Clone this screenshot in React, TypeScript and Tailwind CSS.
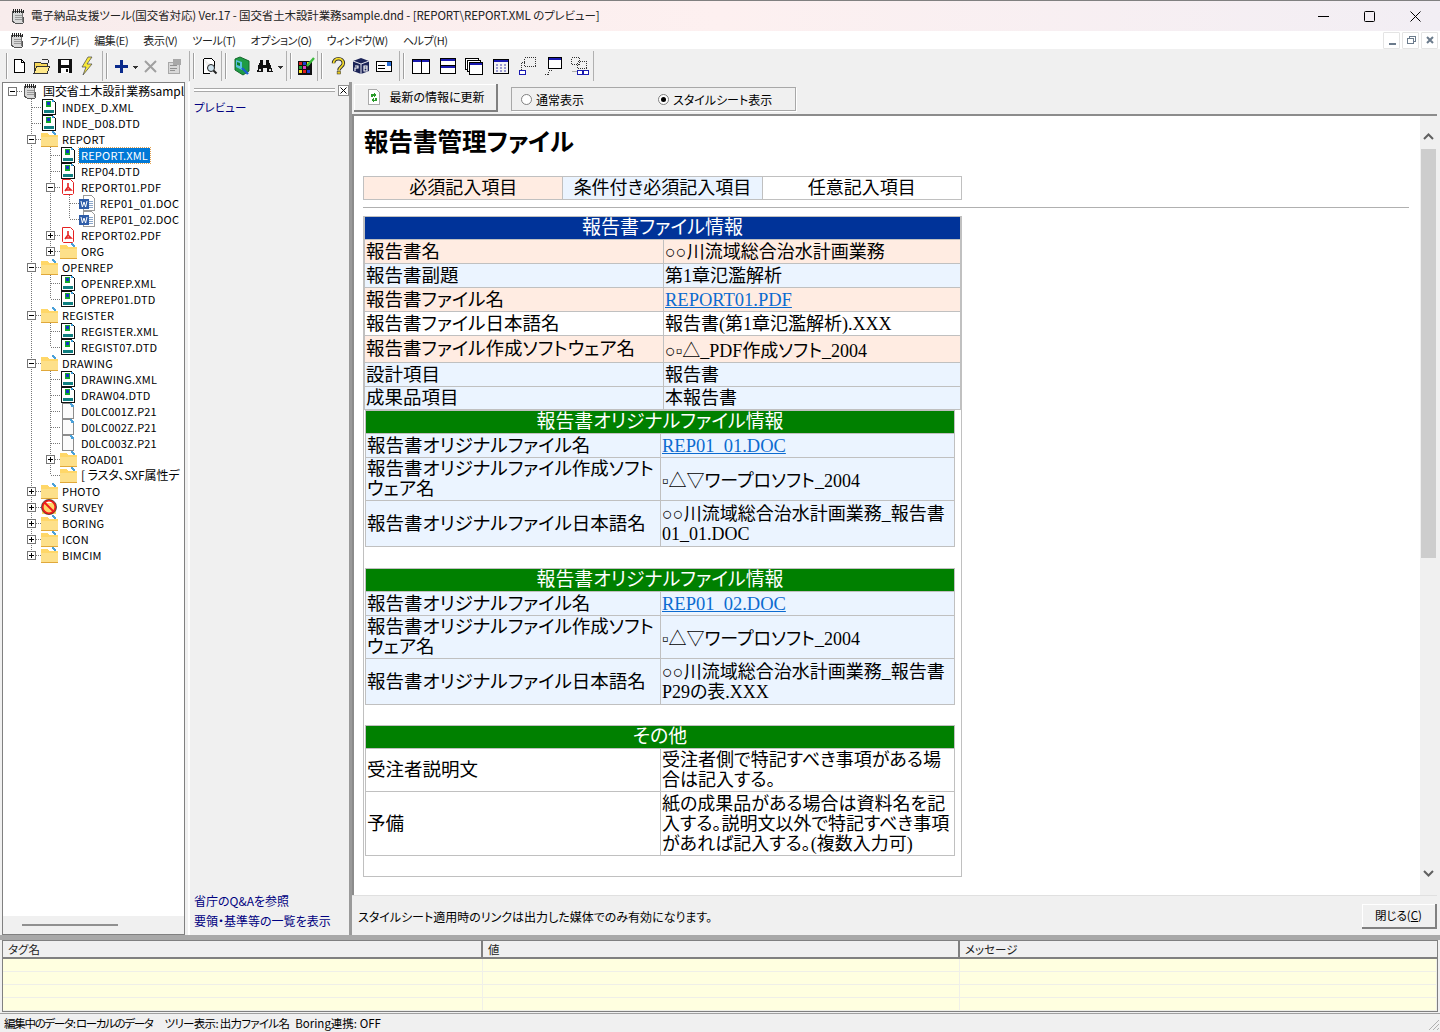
import type { ReactNode } from 'react'

const ui = '[font-family:"Noto_Sans_CJK_JP","Noto_Sans",sans-serif] [font-feature-settings:"palt"]'
const doc = '[font-family:"Liberation_Serif","Noto_Sans_CJK_JP",serif]'

function Ico({ children, w = 18, h = 18 }: { children: ReactNode; w?: number; h?: number }) {
  return (
    <svg width={w} height={h} viewBox={`0 0 ${w} ${h}`} className="shrink-0" shapeRendering="crispEdges">
      {children}
    </svg>
  )
}

function Notebook() {
  return (
    <Ico w={16} h={16}>
      <path d="M3 3h9l2 11-1 1H5l-3-2z" fill="#d8d8d8" stroke="#555" />
      <path d="M3 1v4M5 1v4M7 1v4M9 1v4M11 1v4M13 2v3" stroke="#222" />
      <path d="M5 7h7M5 9h7M5 11h7" stroke="#999" />
      <path d="M12 5l1 9" stroke="#777" />
    </Ico>
  )
}

function XmlIcon() {
  return (
    <Ico w={16} h={16}>
      <path d="M1.5 0.5h10l3 3v12h-13z" fill="#fff" stroke="#111" />
      <rect x="3" y="11" width="10" height="3" fill="#0f7f80" />
      <rect x="5" y="2" width="5" height="6" fill="#12a82c" />
      <rect x="6" y="3" width="3" height="3" fill="#1733c9" />
      <rect x="11" y="1" width="2" height="2" fill="#3aa0dc" />
    </Ico>
  )
}

function FolderIcon() {
  return (
    <Ico w={17} h={16}>
      <path d="M0 2h6l2 2h9v11l-1 1H1l-1-1z" fill="#ffd768" />
      <path d="M0 6h17v9l-1 1H1l-1-1z" fill="#fde08a" />
      <path d="M0 15h17v1H0z" fill="#e0a83a" />
      <path d="M11 0h2v1h1v1h1v2h-2V3h-1V2h-1z" fill="#4aa0d8" />
    </Ico>
  )
}

function PdfIcon() {
  return (
    <svg width="16" height="16" viewBox="0 0 16 16" className="shrink-0">
      <path d="M2.5 0.5h8l3 3v11l-1 1h-9l-1-1z" fill="#fff" stroke="#e52222" />
      <path d="M8 4v4l-3 4M8 8l3 3H6" stroke="#e52222" fill="none" strokeWidth="1.6" />
    </svg>
  )
}

function DocIcon() {
  return (
    <Ico w={16} h={16}>
      <path d="M4.5 0.5h8l3 3v12h-11z" fill="#fff" stroke="#9a9a9a" />
      <path d="M10 6h4M10 8h4M10 10h4M10 12h4" stroke="#8ba6c9" />
      <rect x="0" y="4" width="10" height="10" fill="#2f5da8" />
      <path d="M2 6l1.4 6 1.6-5 1.6 5L8 6" stroke="#fff" fill="none" shapeRendering="auto" />
    </Ico>
  )
}

function BlankIcon() {
  return (
    <Ico w={16} h={16}>
      <path d="M2.5 0.5h8l3 3v12h-11z" fill="#fbfbfb" stroke="#8c8c8c" />
      <path d="M10 0h2v1h1v1h1v2h-3z" fill="#4aa0d8" />
    </Ico>
  )
}

function NoIcon() {
  return (
    <svg width="16" height="16" viewBox="0 0 16 16" className="shrink-0">
      <rect x="1" y="4" width="14" height="11" fill="#ffd768" />
      <circle cx="8" cy="8" r="6.4" fill="none" stroke="#ee1c1c" strokeWidth="2" />
      <circle cx="8" cy="8" r="7.6" fill="none" stroke="#111" strokeWidth="0.6" />
      <path d="M3.5 3.5l9 9" stroke="#ee1c1c" strokeWidth="2" />
    </svg>
  )
}

type Kind = 'book' | 'xml' | 'folder' | 'pdf' | 'doc' | 'blank' | 'no'
type Row = { d: number; exp?: '+' | '-'; kind: Kind; label: string; selected?: boolean; wide?: boolean }

const rows: Row[] = [
  { d: 0, exp: '-', kind: 'book', label: '国交省土木設計業務sample', wide: true },
  { d: 1, kind: 'xml', label: 'INDEX_D.XML' },
  { d: 1, kind: 'xml', label: 'INDE_D08.DTD' },
  { d: 1, exp: '-', kind: 'folder', label: 'REPORT' },
  { d: 2, kind: 'xml', label: 'REPORT.XML', selected: true },
  { d: 2, kind: 'xml', label: 'REP04.DTD' },
  { d: 2, exp: '-', kind: 'pdf', label: 'REPORT01.PDF' },
  { d: 3, kind: 'doc', label: 'REP01_01.DOC' },
  { d: 3, kind: 'doc', label: 'REP01_02.DOC' },
  { d: 2, exp: '+', kind: 'pdf', label: 'REPORT02.PDF' },
  { d: 2, exp: '+', kind: 'folder', label: 'ORG' },
  { d: 1, exp: '-', kind: 'folder', label: 'OPENREP' },
  { d: 2, kind: 'xml', label: 'OPENREP.XML' },
  { d: 2, kind: 'xml', label: 'OPREP01.DTD' },
  { d: 1, exp: '-', kind: 'folder', label: 'REGISTER' },
  { d: 2, kind: 'xml', label: 'REGISTER.XML' },
  { d: 2, kind: 'xml', label: 'REGIST07.DTD' },
  { d: 1, exp: '-', kind: 'folder', label: 'DRAWING' },
  { d: 2, kind: 'xml', label: 'DRAWING.XML' },
  { d: 2, kind: 'xml', label: 'DRAW04.DTD' },
  { d: 2, kind: 'blank', label: 'D0LC001Z.P21' },
  { d: 2, kind: 'blank', label: 'D0LC002Z.P21' },
  { d: 2, kind: 'blank', label: 'D0LC003Z.P21' },
  { d: 2, exp: '+', kind: 'folder', label: 'ROAD01' },
  { d: 2, kind: 'folder', label: '[ ラスタ、SXF属性デ', wide: true },
  { d: 1, exp: '+', kind: 'folder', label: 'PHOTO' },
  { d: 1, exp: '+', kind: 'no', label: 'SURVEY' },
  { d: 1, exp: '+', kind: 'folder', label: 'BORING' },
  { d: 1, exp: '+', kind: 'folder', label: 'ICON' },
  { d: 1, exp: '+', kind: 'folder', label: 'BIMCIM' },
]

function hasNext(i: number, c: number) {
  for (let j = i + 1; j < rows.length; j++) {
    if (rows[j].d === c) return true
    if (rows[j].d < c) return false
  }
  return false
}

function TreeCell({ mode, exp, root, next }: { mode: 'line' | 'empty' | 'elbow'; exp?: '+' | '-'; root?: boolean; next?: boolean }) {
  return (
    <svg width="19" height="16" viewBox="0 0 19 16" className="shrink-0" shapeRendering="crispEdges">
      {mode === 'line' && <path d="M9.5 0v16" stroke="#777" strokeDasharray="1 1" />}
      {mode === 'elbow' && (
        <>
          {!root && <path d={next ? 'M9.5 0v16' : 'M9.5 0v8'} stroke="#777" strokeDasharray="1 1" />}
          <path d="M10 8.5h9" stroke="#777" strokeDasharray="1 1" />
        </>
      )}
      {exp && (
        <>
          <rect x="5.5" y="4.5" width="8" height="8" fill="#fff" stroke="#777" />
          <path d="M7 8.5h5" stroke="#000" />
          {exp === '+' && <path d="M9.5 6v5" stroke="#000" />}
        </>
      )}
    </svg>
  )
}

function kindIcon(k: Kind) {
  if (k === 'book') return <Notebook />
  if (k === 'xml') return <XmlIcon />
  if (k === 'folder') return <FolderIcon />
  if (k === 'pdf') return <PdfIcon />
  if (k === 'doc') return <DocIcon />
  if (k === 'no') return <NoIcon />
  return <BlankIcon />
}

function Tree() {
  return (
    <div className="flex flex-col">
      {rows.map((r, i) => (
        <div key={i} className="flex h-4 items-center whitespace-nowrap">
          {Array.from({ length: r.d }).map((_, c) => (
            <TreeCell key={c} mode={hasNext(i, c) ? 'line' : 'empty'} />
          ))}
          <TreeCell mode="elbow" exp={r.exp} root={r.d === 0} next={hasNext(i, r.d)} />
          <span className="flex w-[19px] shrink-0">{kindIcon(r.kind)}</span>
          <span className={`px-[2px] pb-[1px] leading-[14px] ${r.wide ? 'text-[12px] tracking-[-0.1px]' : 'text-[11px] tracking-[0.2px]'} ${r.selected ? 'bg-[#0078d7] text-white outline-1 outline-dotted outline-[#e0a050]' : 'text-black'}`}>
            {r.label}
          </span>
        </div>
      ))}
    </div>
  )
}

function Grip() {
  return <div className="mx-[3px] h-[26px] w-[2px] border-l border-[#a0a0a0] bg-white" />
}
function Tb({ children, w = 23 }: { children: ReactNode; w?: number }) {
  return <div className="flex h-[26px] items-center justify-center" style={{ width: w }}>{children}</div>
}
function Band({ children, className = '' }: { children: ReactNode; className?: string }) {
  return <div className={`flex h-[30px] items-center border-r border-[#b0b0b0] ${className}`}>{children}</div>
}
function Arrow() {
  return (
    <Ico w={7} h={18}>
      <path d="M1 9h5v1H1zM2 10h3v1H2zM3 11h1v1H3z" fill="#333" />
    </Ico>
  )
}
function Win({ children }: { children: ReactNode }) {
  return <Ico>{children}</Ico>
}

function Toolbar() {
  return (
    <div className="flex h-[33px] shrink-0 items-center bg-[#f0f0f0] pl-[3px]">
      <Band className="w-[100px]">
        <Grip />
        <Tb w={17}>
          <Ico><path d="M4.5 2.5h7l3 3v10h-10z" fill="#fff" stroke="#000" /><path d="M11.5 2.5v3h3" fill="none" stroke="#000" /></Ico>
        </Tb>
        <Tb w={30}>
          <Ico>
            <path d="M1 5h6l1 1h6v10H1z" fill="#f7d85a" stroke="#333" />
            <path d="M1 16l3-7h13l-3 7z" fill="#ffe98a" stroke="#333" />
            <path d="M9 2h5l2 2-1 2" fill="none" stroke="#333" />
          </Ico>
        </Tb>
        <Tb w={16}>
          <Ico>
            <path d="M2 2h14v14H2z" fill="#111" />
            <rect x="5" y="3" width="8" height="5" fill="#fff" />
            <rect x="5" y="11" width="8" height="5" fill="#fff" />
            <rect x="10" y="12" width="2" height="3" fill="#111" />
          </Ico>
        </Tb>
        <Tb w={30}>
          <svg width="18" height="20" viewBox="0 0 18 20">
            <path d="M10 1L4 11h4l-3 8 9-11H9l5-7z" fill="#f7e838" stroke="#555" strokeWidth="0.8" />
          </svg>
        </Tb>
      </Band>
      <Band className="w-[87px]">
        <Grip />
        <Tb w={20}><Ico><path d="M8 3h3v5h5v3h-5v5H8v-5H3V8h5z" fill="#0a2a8c" /></Ico></Tb>
        <Tb w={9}><Arrow /></Tb>
        <Tb w={22}><Ico><path d="M3 4l11 11M14 4L3 15" stroke="#a0a0a0" strokeWidth="2" shapeRendering="auto" /></Ico></Tb>
        <Tb w={24}><Ico><path d="M3 5h11v11H3z" fill="#d8d8d8" stroke="#a8a8a8" /><path d="M8 2h8v6H8z" fill="#a8a8a8" /><path d="M5 8h7M5 11h7M5 13h5" stroke="#909090" /></Ico></Tb>
      </Band>
      <Band className="w-[32px]">
        <Grip />
        <Tb w={22}>
          <Ico>
            <path d="M3.5 1.5h8l3 3v6M10 16.5H3.5v-15" fill="#fff" stroke="#000" />
            <circle cx="11" cy="11" r="3.5" fill="#cfe3ee" stroke="#222" shapeRendering="auto" />
            <path d="M13.5 13.5l3 3" stroke="#222" strokeWidth="2" shapeRendering="auto" />
          </Ico>
        </Tb>
      </Band>
      <Band className="w-[65px]">
        <Grip />
        <Tb w={23}>
          <svg width="20" height="20" viewBox="0 0 20 20">
            <path d="M3 3l5-2 9 4v10l-6 4-8-5z" fill="#1f9c45" stroke="#14692c" />
            <path d="M4 4l6 2v8l-6-3z" fill="#58c0e0" />
            <path d="M5 6l3 1v3l-3-1z" fill="#0a7f2a" />
            <path d="M10 12l6 6" stroke="#1b5fd0" strokeWidth="2.4" />
          </svg>
        </Tb>
        <Tb w={23}>
          <Ico>
            <path d="M3 6h4v2h3V6h4l3 9h-6v-4H7v4H1z" fill="#111" />
            <rect x="4" y="3" width="3" height="4" fill="#111" />
            <rect x="10" y="3" width="3" height="4" fill="#111" />
            <rect x="3" y="12" width="2" height="2" fill="#ddd" />
            <rect x="13" y="12" width="2" height="2" fill="#ddd" />
          </Ico>
        </Tb>
        <Tb w={9}><Arrow /></Tb>
      </Band>
      <Band className="w-[31px]">
        <Grip />
        <Tb w={22}>
          <svg width="20" height="20" viewBox="0 0 20 20" shapeRendering="crispEdges">
            <rect x="1.5" y="4.5" width="14" height="14" fill="#111" />
            <rect x="3" y="6" width="3" height="3" fill="#e02020" />
            <rect x="7" y="6" width="3" height="3" fill="#2040d0" />
            <rect x="11" y="6" width="3" height="3" fill="#f5e020" />
            <rect x="3" y="10" width="3" height="3" fill="#20a030" />
            <rect x="7" y="10" width="3" height="3" fill="#e040c0" />
            <rect x="3" y="14" width="3" height="3" fill="#f5e020" />
            <rect x="7" y="14" width="3" height="3" fill="#e02020" />
            <rect x="11" y="14" width="3" height="3" fill="#2040d0" />
            <path d="M11 10l7-8" stroke="#3cba3c" strokeWidth="2.4" shapeRendering="auto" />
          </svg>
        </Tb>
      </Band>
      <Band className="w-[82px]">
        <Grip />
        <Tb>
          <svg width="16" height="20" viewBox="0 0 18 20">
            <path d="M4 7c0-7 11-7 11 0 0 4-5 4-5 8" fill="none" stroke="#333" strokeWidth="4" />
            <path d="M4 7c0-7 11-7 11 0 0 4-5 4-5 8" fill="none" stroke="#f5dc28" strokeWidth="2" />
            <rect x="8" y="16" width="4" height="3" fill="#e8c818" stroke="#333" strokeWidth="0.6" />
          </svg>
        </Tb>
        <Tb>
          <svg width="20" height="18" viewBox="0 0 20 18">
            <path d="M2 4l8-3 8 3v10l-8 3-8-3z" fill="#1c2458" />
            <path d="M2 4l8 3 8-3M10 7v10" stroke="#e8e8f0" fill="none" />
            <path d="M4 9h3v2H4v3M13 9h3v5h-3zM13 11h3" stroke="#fff" fill="none" strokeWidth="1.1" />
          </svg>
        </Tb>
        <Tb>
          <Ico>
            <path d="M1.5 4.5h15v10h-15z" fill="#fff" stroke="#000" />
            <path d="M3 8h7M3 11h7" stroke="#000" />
            <rect x="12" y="5" width="4" height="4" fill="#2a6fd8" />
          </Ico>
        </Tb>
      </Band>
      <div className="flex h-[30px] w-[194px] items-center border-r border-[#b0b0b0]">
        <Grip />
        <Tb w={27}>
          <Win>
            <path d="M0.5 2.5h17v14h-17z" fill="#fff" stroke="#000" />
            <rect x="1" y="3" width="16" height="2" fill="#1a1ab0" />
            <path d="M9.5 3v13" stroke="#000" />
          </Win>
        </Tb>
        <Tb w={27}>
          <Win>
            <path d="M1.5 1.5h15v15h-15z" fill="#fff" stroke="#000" />
            <rect x="2" y="2" width="14" height="2" fill="#1a1ab0" />
            <rect x="1" y="8" width="16" height="1" fill="#000" />
            <rect x="2" y="9" width="14" height="2" fill="#1a1ab0" />
          </Win>
        </Tb>
        <Tb w={27}>
          <Win>
            <path d="M0.5 1.5h13v11h-13z" fill="#fff" stroke="#000" />
            <path d="M2.5 3.5h13v11h-13z" fill="#fff" stroke="#000" />
            <path d="M4.5 5.5h13v12h-13z" fill="#fff" stroke="#000" />
            <rect x="5" y="6" width="12" height="2" fill="#1a1ab0" />
          </Win>
        </Tb>
        <Tb w={27}>
          <Win>
            <path d="M1.5 2.5h15v14h-15z" fill="#f4f4f4" stroke="#000" />
            <rect x="2" y="3" width="14" height="2" fill="#1a1ab0" />
            <path d="M4 7h2v2H4zM8 7h2v2H8zM12 7h2v2h-2zM4 10h2v2H4zM8 10h2v2H8zM12 10h2v2h-2zM4 13h2v2H4zM8 13h2v2H8zM12 13h2v2h-2z" fill="#9a9ad0" />
          </Win>
        </Tb>
        <Tb w={27}>
          <Win>
            <path d="M6.5 0.5h11v9h-11zM3.5 5.5v8" fill="none" stroke="#333" strokeDasharray="1 1" />
            <path d="M3.5 5.5h4" stroke="#333" strokeDasharray="1 1" />
            <rect x="1.5" y="13.5" width="6" height="4" fill="#fff" stroke="#1a1ab0" />
          </Win>
        </Tb>
        <Tb w={27}>
          <Win>
            <path d="M4.5 0.5h13v11h-13z" fill="#fff" stroke="#000" />
            <rect x="5" y="1" width="12" height="2" fill="#1a1ab0" />
            <path d="M0.5 17.5h4v-4h4" fill="none" stroke="#333" strokeDasharray="1 1" />
          </Win>
        </Tb>
        <Tb w={27}>
          <Win>
            <path d="M0.5 0.5h8v7h-8zM6.5 4.5h9v7h-9z" fill="none" stroke="#333" strokeDasharray="1 1" />
            <rect x="1" y="14" width="6" height="1" fill="#aaa" />
            <rect x="6.5" y="13.5" width="5" height="4" fill="#fff" stroke="#1a1ab0" />
            <rect x="12.5" y="13.5" width="5" height="4" fill="#fff" stroke="#1a1ab0" />
          </Win>
        </Tb>
      </div>
    </div>
  )
}

function MdiBtn({ children }: { children: ReactNode }) {
  return (
    <div className="flex h-[17px] w-[17px] items-center justify-center rounded-[1px] border border-[#e4e4e4] bg-white">
      <svg width="10" height="10" viewBox="0 0 10 10" stroke="#6b7b8c" fill="none" shapeRendering="crispEdges">{children}</svg>
    </div>
  )
}

const labelCls = 'border border-[#c0c0c0] px-[1px] text-[18.5px] leading-[20px] text-left align-middle'
const valueCls = 'border border-[#c0c0c0] px-[1px] text-[18px] leading-[20px] text-left align-middle'
const linkCls = 'text-[#0c6bd0] underline text-[18.5px]'

const topRows: { l: string; v: ReactNode; c: string; h: string }[] = [
  { l: '報告書名', v: '○○川流域総合治水計画業務', c: 'bg-[#ffece2]', h: 'h-[24px]' },
  { l: '報告書副題', v: '第1章氾濫解析', c: 'bg-[#ebf4ff]', h: 'h-[24px]' },
  { l: '報告書ファイル名', v: <span className={linkCls}>REPORT01.PDF</span>, c: 'bg-[#ffece2]', h: 'h-[24px]' },
  { l: '報告書ファイル日本語名', v: '報告書(第1章氾濫解析).XXX', c: 'bg-white', h: 'h-[24px]' },
  { l: '報告書ファイル作成ソフトウェア名', v: <span className="relative top-[2px]">○▫△_PDF作成ソフト_2004</span>, c: 'bg-[#ffece2]', h: 'h-[27px]' },
  { l: '設計項目', v: '報告書', c: 'bg-[#ebf4ff]', h: 'h-[24px]' },
  { l: '成果品項目', v: '本報告書', c: 'bg-[#ebf4ff]', h: 'h-[23px]' },
]

function SubTable({ title, rows: rs, bg, className = '' }: { title: string; rows: { l: string; v: ReactNode; h: string }[]; bg: string; className?: string }) {
  return (
    <table className={`ml-[1px] w-[590px] table-fixed border-collapse ${className}`}>
      <colgroup>
        <col className="w-[295px]" />
        <col />
      </colgroup>
      <tbody>
        <tr className="h-[23px]">
          <th colSpan={2} className="border border-[#c0c0c0] bg-[#008000] text-center text-[18.9px] font-normal leading-[20px] text-white">
            {title}
          </th>
        </tr>
        {rs.map((r, i) => (
          <tr key={i} className={`${r.h} ${bg}`}>
            <td className={labelCls}>{r.l}</td>
            <td className={valueCls}>{r.v}</td>
          </tr>
        ))}
      </tbody>
    </table>
  )
}

const orig = (name: string, ja: ReactNode) => [
  { l: '報告書オリジナルファイル名', v: <span className={linkCls}>{name}</span>, h: 'h-[24px]' },
  { l: '報告書オリジナルファイル作成ソフトウェア名', v: <span className="relative top-[2px]">▫△▽ワープロソフト_2004</span>, h: 'h-[43px]' },
  { l: '報告書オリジナルファイル日本語名', v: ja, h: 'h-[46px]' },
]

function Content() {
  return (
    <div className={`${doc} h-full overflow-hidden pl-[9px] text-black`}>
      <h1 className={`${ui} ml-[1px] pt-[10px] text-[24.5px] font-bold leading-[30px]`}>報告書管理ファイル</h1>
      <table className="mt-[20px] w-[599px] table-fixed border-collapse text-center text-[18px] leading-[20px]">
        <tbody>
          <tr className="h-[23px]">
            <td className="border border-[#c0c0c0] bg-[#ffece2]">必須記入項目</td>
            <td className="border border-[#c0c0c0] bg-[#ebf4ff]">条件付き必須記入項目</td>
            <td className="border border-[#c0c0c0] bg-white">任意記入項目</td>
          </tr>
        </tbody>
      </table>
      <hr className="mt-[7px] w-[1046px] border-t border-[#b0b0b0]" />
      <div className="mt-[8px] w-[599px] border-x border-b border-[#c0c0c0] pb-[20px]">
        <table className="w-[597px] table-fixed border-collapse">
          <colgroup>
            <col className="w-[299px]" />
            <col />
          </colgroup>
          <tbody>
            <tr className="h-[23px]">
              <th colSpan={2} className="border border-[#c0c0c0] bg-[#003399] text-center text-[19px] font-normal leading-[20px] text-white">
                報告書ファイル情報
              </th>
            </tr>
            {topRows.map((r) => (
              <tr key={r.l} className={`${r.h} ${r.c}`}>
                <td className={labelCls}>{r.l}</td>
                <td className={valueCls}>{r.v}</td>
              </tr>
            ))}
          </tbody>
        </table>
        <SubTable
          title="報告書オリジナルファイル情報"
          bg="bg-[#ebf4ff]"
          rows={orig('REP01_01.DOC', '○○川流域総合治水計画業務_報告書01_01.DOC')}
        />
        <SubTable
          className="mt-[21px]"
          title="報告書オリジナルファイル情報"
          bg="bg-[#ebf4ff]"
          rows={orig('REP01_02.DOC', '○○川流域総合治水計画業務_報告書P29の表.XXX')}
        />
        <SubTable
          className="mt-[20px]"
          title="その他"
          bg="bg-white"
          rows={[
            { l: '受注者説明文', v: '受注者側で特記すべき事項がある場合は記入する。', h: 'h-[43px]' },
            { l: '予備', v: '紙の成果品がある場合は資料名を記入する。説明文以外で特記すべき事項があれば記入する。(複数入力可)', h: 'h-[64px]' },
          ]}
        />
      </div>
    </div>
  )
}

function Scrollbar() {
  return (
    <div className="flex w-[17px] shrink-0 flex-col items-center bg-[#f0f0f0]">
      <div className="flex h-[33px] w-full items-end justify-center pb-[9px]">
        <svg width="11" height="7" viewBox="0 0 11 7"><path d="M1 6l4.5-4.5L10 6" fill="none" stroke="#606060" strokeWidth="2" /></svg>
      </div>
      <div className="h-[409px] w-[15px] bg-[#cdcdcd]" />
      <div className="flex-1" />
      <div className="flex h-[28px] w-full items-start justify-center pt-[3px]">
        <svg width="11" height="7" viewBox="0 0 11 7"><path d="M1 1l4.5 4.5L10 1" fill="none" stroke="#606060" strokeWidth="2" /></svg>
      </div>
    </div>
  )
}

export default function App() {
  return (
    <div className={`${ui} flex h-[1032px] w-[1440px] flex-col overflow-hidden bg-[#f0f0f0] text-[12px] text-black`}>
      {/* title bar */}
      <div className="flex h-[31px] shrink-0 items-center border-t border-[#808080] bg-gradient-to-r from-[#f8ecec] via-[#fdf0f0] to-[#f2eef4] pl-[10px]">
        <Notebook />
        <span className="ml-[5px] flex-1 text-[11.5px] tracking-[-0.12px] text-[#222]">
          電子納品支援ツール(国交省対応) Ver.17 - 国交省土木設計業務sample.dnd - [REPORT\REPORT.XML のプレビュー]
        </span>
        <div className="flex items-center pr-[2px]">
          <div className="flex w-[46px] justify-center">
            <svg width="11" height="11" viewBox="0 0 11 11"><path d="M0 5.5h11" stroke="#000" /></svg>
          </div>
          <div className="flex w-[46px] justify-center">
            <svg width="11" height="11" viewBox="0 0 11 11"><rect x="0.5" y="0.5" width="10" height="10" rx="1" fill="none" stroke="#000" /></svg>
          </div>
          <div className="flex w-[46px] justify-center">
            <svg width="11" height="11" viewBox="0 0 11 11"><path d="M0.5 0.5l10 10M10.5 0.5l-10 10" stroke="#000" /></svg>
          </div>
        </div>
      </div>

      {/* menu bar */}
      <div className="flex h-[18px] shrink-0 items-center bg-white pl-[9px]">
        <Notebook />
        <div className="ml-[5px] flex flex-1 gap-[15px] text-[11px] tracking-[-0.35px] text-[#222]">
          <span>ファイル(F)</span>
          <span>編集(E)</span>
          <span>表示(V)</span>
          <span>ツール(T)</span>
          <span>オプション(O)</span>
          <span>ウィンドウ(W)</span>
          <span>ヘルプ(H)</span>
        </div>
        <div className="flex gap-[2px] pr-[2px]">
          <MdiBtn><path d="M2 8h6v1H2z" fill="#6b7b8c" /></MdiBtn>
          <MdiBtn><path d="M1.5 3.5h6v5h-6zM3.5 3V1.5h6v5H8" /></MdiBtn>
          <MdiBtn><path d="M2 2l6 6M8 2l-6 6" strokeWidth="2" shapeRendering="auto" /></MdiBtn>
        </div>
      </div>

      <Toolbar />

      {/* panes */}
      <div className="flex h-[853px] shrink-0">
        <div className="ml-[2px] flex h-full w-[183px] shrink-0 flex-col border border-[#808080]">
          <div className="min-h-0 flex-1 overflow-hidden bg-white">
            <Tree />
          </div>
          <div className="flex h-[18px] shrink-0 items-center bg-[#f0f0f0] pl-[19px]">
            <div className="h-[2px] w-[96px] bg-[#909090]" />
          </div>
        </div>

        <div className="ml-[3px] flex h-full w-[161px] shrink-0 flex-col border-l-2 border-white pl-[4px] text-[#000080]">
          <div className="flex h-[14px] items-center pt-[2px]">
            <div className="h-[4px] w-[141px] border-y border-[#a8a8a8] bg-white" />
            <div className="ml-[3px] flex h-[11px] w-[11px] items-center justify-center border border-[#909090] bg-white">
              <svg width="7" height="7" viewBox="0 0 7 7"><path d="M0.5 0.5l6 6M6.5 0.5l-6 6" stroke="#000" /></svg>
            </div>
          </div>
          <div className="mt-[3px] text-[11.5px] leading-[16px]">プレビュー</div>
          <div className="flex-1" />
          <div className="mb-[6px] flex flex-col gap-[4px] text-[12px] leading-[16px]">
            <span>省庁のQ&amp;Aを参照</span>
            <span>要領・基準等の一覧を表示</span>
          </div>
        </div>

        <div className="w-[3px] shrink-0 bg-[#9a9a9a]" />

        <div className="flex min-w-0 flex-1 flex-col pr-[3px]">
          <div className="flex h-[32px] shrink-0 items-start pl-[2px] pt-[2px]">
            <button className="flex h-[28px] w-[144px] items-center justify-center gap-[8px] border-b-2 border-r-2 border-[#808080] bg-[#f0f0f0] pl-[2px] text-[12px] shadow-[inset_1px_1px_0_#fff]">
              <svg width="14" height="18" viewBox="0 0 14 18" shapeRendering="crispEdges">
                <path d="M1.5 1.5h8l3 3v12h-11z" fill="#fff" stroke="#aaa" />
                <path d="M7 5l3 2-3 2V7.5H6V9H4V6h3zM7 14l-3-2 3-2v1.5h1V10h2v3H7z" fill="#2a9a2a" />
              </svg>
              最新の情報に更新
            </button>
            <div className="ml-[13px] mt-[3px] flex h-[24px] w-[285px] items-center border border-[#a8a8a8] pl-[9px] text-[12px] shadow-[1px_1px_0_#fff]">
              <span className="h-[11px] w-[11px] rounded-full border border-[#808080] bg-white" />
              <span className="ml-[4px] w-[122px] pt-[2px]">通常表示</span>
              <span className="flex h-[11px] w-[11px] items-center justify-center rounded-full border border-[#808080] bg-white">
                <span className="h-[5px] w-[5px] rounded-full bg-black" />
              </span>
              <span className="ml-[4px] pt-[2px]">スタイルシート表示</span>
            </div>
          </div>

          <div className="flex min-h-0 flex-1 border-l-2 border-t-2 border-[#8c8c8c] bg-white">
            <div className="min-w-0 flex-1"><Content /></div>
            <Scrollbar />
          </div>

          <div className="flex h-[40px] shrink-0 items-start justify-between border-t border-[#e0e0e0] bg-[#f0f0f0] pl-[6px] pt-[8px] text-[12px]">
            <span className="pt-[4px]">スタイルシート適用時のリンクは出力した媒体でのみ有効になります。</span>
            <button className="h-[25px] w-[75px] border-b-2 border-r-2 border-[#808080] text-[11.5px] shadow-[inset_1px_1px_0_#fff]">
              閉じる(<span className="underline">C</span>)
            </button>
          </div>
        </div>
      </div>

      {/* grid */}
      <div className="h-[5px] shrink-0 bg-[#a8a8a8]" />
      <div className="mx-[2px] flex h-[72px] shrink-0 flex-col border border-[#808080]">
        <div className="grid h-[18px] shrink-0 grid-cols-[480px_477px_1fr] border-b-2 border-[#808080] text-[11.5px] leading-[16px] text-[#222]">
          <span className="border-r-2 border-[#808080] pl-[5px]">タグ名</span>
          <span className="border-r-2 border-[#808080] pl-[5px]">値</span>
          <span className="pl-[5px]">メッセージ</span>
        </div>
        <div className="grid flex-1 grid-cols-[480px_477px_1fr] overflow-hidden bg-[#ffffe0]">
          {[0, 1, 2].map((c) => (
            <div key={c} className="flex flex-col border-r border-[#f0f0e8]">
              {[0, 1, 2, 3].map((r) => (
                <div key={r} className="h-[13px] shrink-0 border-b border-[#efefe8]" />
              ))}
            </div>
          ))}
        </div>
      </div>

      {/* status bar */}
      <div className="mt-[1px] flex h-[19px] shrink-0 items-center justify-between border-t border-[#a0a0a0] pb-[1px] pl-[4px] text-[11.5px] leading-[14px]">
        <span className="flex whitespace-pre">
          <span className="tracking-[-1.3px]">編集中のデータ: ローカルのデータ</span>
          <span className="ml-[12px] tracking-[-0.7px]">ツリー表示: 出力ファイル名</span>
          <span className="ml-[6px]">Boring連携: OFF</span>
        </span>
        <svg width="14" height="14" viewBox="0 0 14 14" className="self-end">
          <path d="M13 3L3 13M13 7l-6 6M13 11l-2 2" stroke="#b0b0b0" />
        </svg>
      </div>
    </div>
  )
}
